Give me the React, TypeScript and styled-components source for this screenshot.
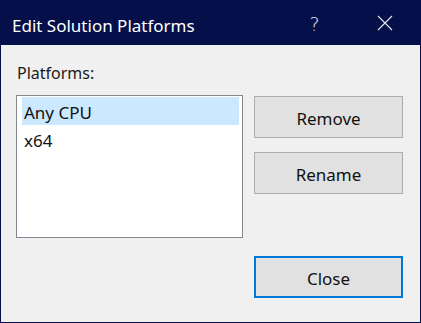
import styled, { createGlobalStyle } from 'styled-components';

const GlobalStyle = createGlobalStyle`
  html, body {
    margin: 0;
    padding: 0;
    background: #f0f0f0;
  }
  body {
    font-family: "Noto Sans", "Open Sans", sans-serif;
  }
`;

const Window = styled.div`
  width: 421px;
  height: 323px;
  box-sizing: border-box;
  border: 1px solid #05104a;
  border-top: none;
  background: #f0f0f0;
  display: flex;
  flex-direction: column;
`;

const TitleBar = styled.div`
  height: 45px;
  flex: none;
  background: #05104a;
  color: #ffffff;
  display: flex;
  align-items: center;
  padding-left: 11px;
  font-size: 17px;
`;

const Title = styled.div`
  flex: 1;
  padding-top: 6px;
`;

const TitleButton = styled.div<{ $width: number }>`
  width: ${({ $width }) => $width}px;
  height: 45px;
  display: flex;
  align-items: center;
  justify-content: center;
  color: #e8e8ee;
`;

const HelpGlyph = styled.span`
  font-family: "DejaVu Sans", sans-serif;
  font-size: 19px;
  font-weight: 200;
  padding-top: 2px;
`;

const Content = styled.div`
  flex: 1;
  padding: 17px 17px 0 15px;
  display: flex;
  flex-direction: column;
`;

const Label = styled.div`
  font-size: 16px;
  color: #1a1a1a;
  padding-left: 1px;
  height: 33px;
`;

const Body = styled.div`
  display: flex;
  gap: 11px;
  align-items: flex-start;
`;

const ListBox = styled.div`
  width: 227px;
  height: 143px;
  box-sizing: border-box;
  border: 1px solid #828790;
  background: #ffffff;
  padding: 1px 3px 0 5px;
`;

const ListItem = styled.div<{ $selected?: boolean }>`
  height: 28px;
  line-height: 32px;
  padding-left: 2px;
  font-size: 17px;
  color: #111111;
  background: ${({ $selected }) => ($selected ? '#cce8ff' : 'transparent')};
`;

const ButtonColumn = styled.div`
  display: flex;
  flex-direction: column;
  gap: 14px;
  padding-top: 1px;
`;

const Button = styled.button<{ $default?: boolean }>`
  width: 149px;
  height: 42px;
  box-sizing: border-box;
  background: #e1e1e1;
  border: ${({ $default }) => ($default ? '2px solid #0078d7' : '1px solid #adadad')};
  font-family: "Noto Sans", "Open Sans", sans-serif;
  font-size: 17px;
  color: #111111;
  padding: 3px 0 0;
  cursor: default;
`;

const Footer = styled.div`
  display: flex;
  justify-content: flex-end;
  margin-top: 18px;
`;

export default function App() {
  return (
    <>
      <GlobalStyle />
      <Window>
        <TitleBar>
          <Title>Edit Solution Platforms</Title>
          <TitleButton $width={71}>
            <HelpGlyph>?</HelpGlyph>
          </TitleButton>
          <TitleButton $width={70}>
            <svg width="16" height="16" viewBox="0 0 16 16">
              <path d="M1 1 L15 15 M15 1 L1 15" stroke="#e8e8ee" strokeWidth="1.1" fill="none" />
            </svg>
          </TitleButton>
        </TitleBar>
        <Content>
          <Label>Platforms:</Label>
          <Body>
            <ListBox>
              <ListItem $selected>Any CPU</ListItem>
              <ListItem>x64</ListItem>
            </ListBox>
            <ButtonColumn>
              <Button>Remove</Button>
              <Button>Rename</Button>
            </ButtonColumn>
          </Body>
          <Footer>
            <Button $default>Close</Button>
          </Footer>
        </Content>
      </Window>
    </>
  );
}
